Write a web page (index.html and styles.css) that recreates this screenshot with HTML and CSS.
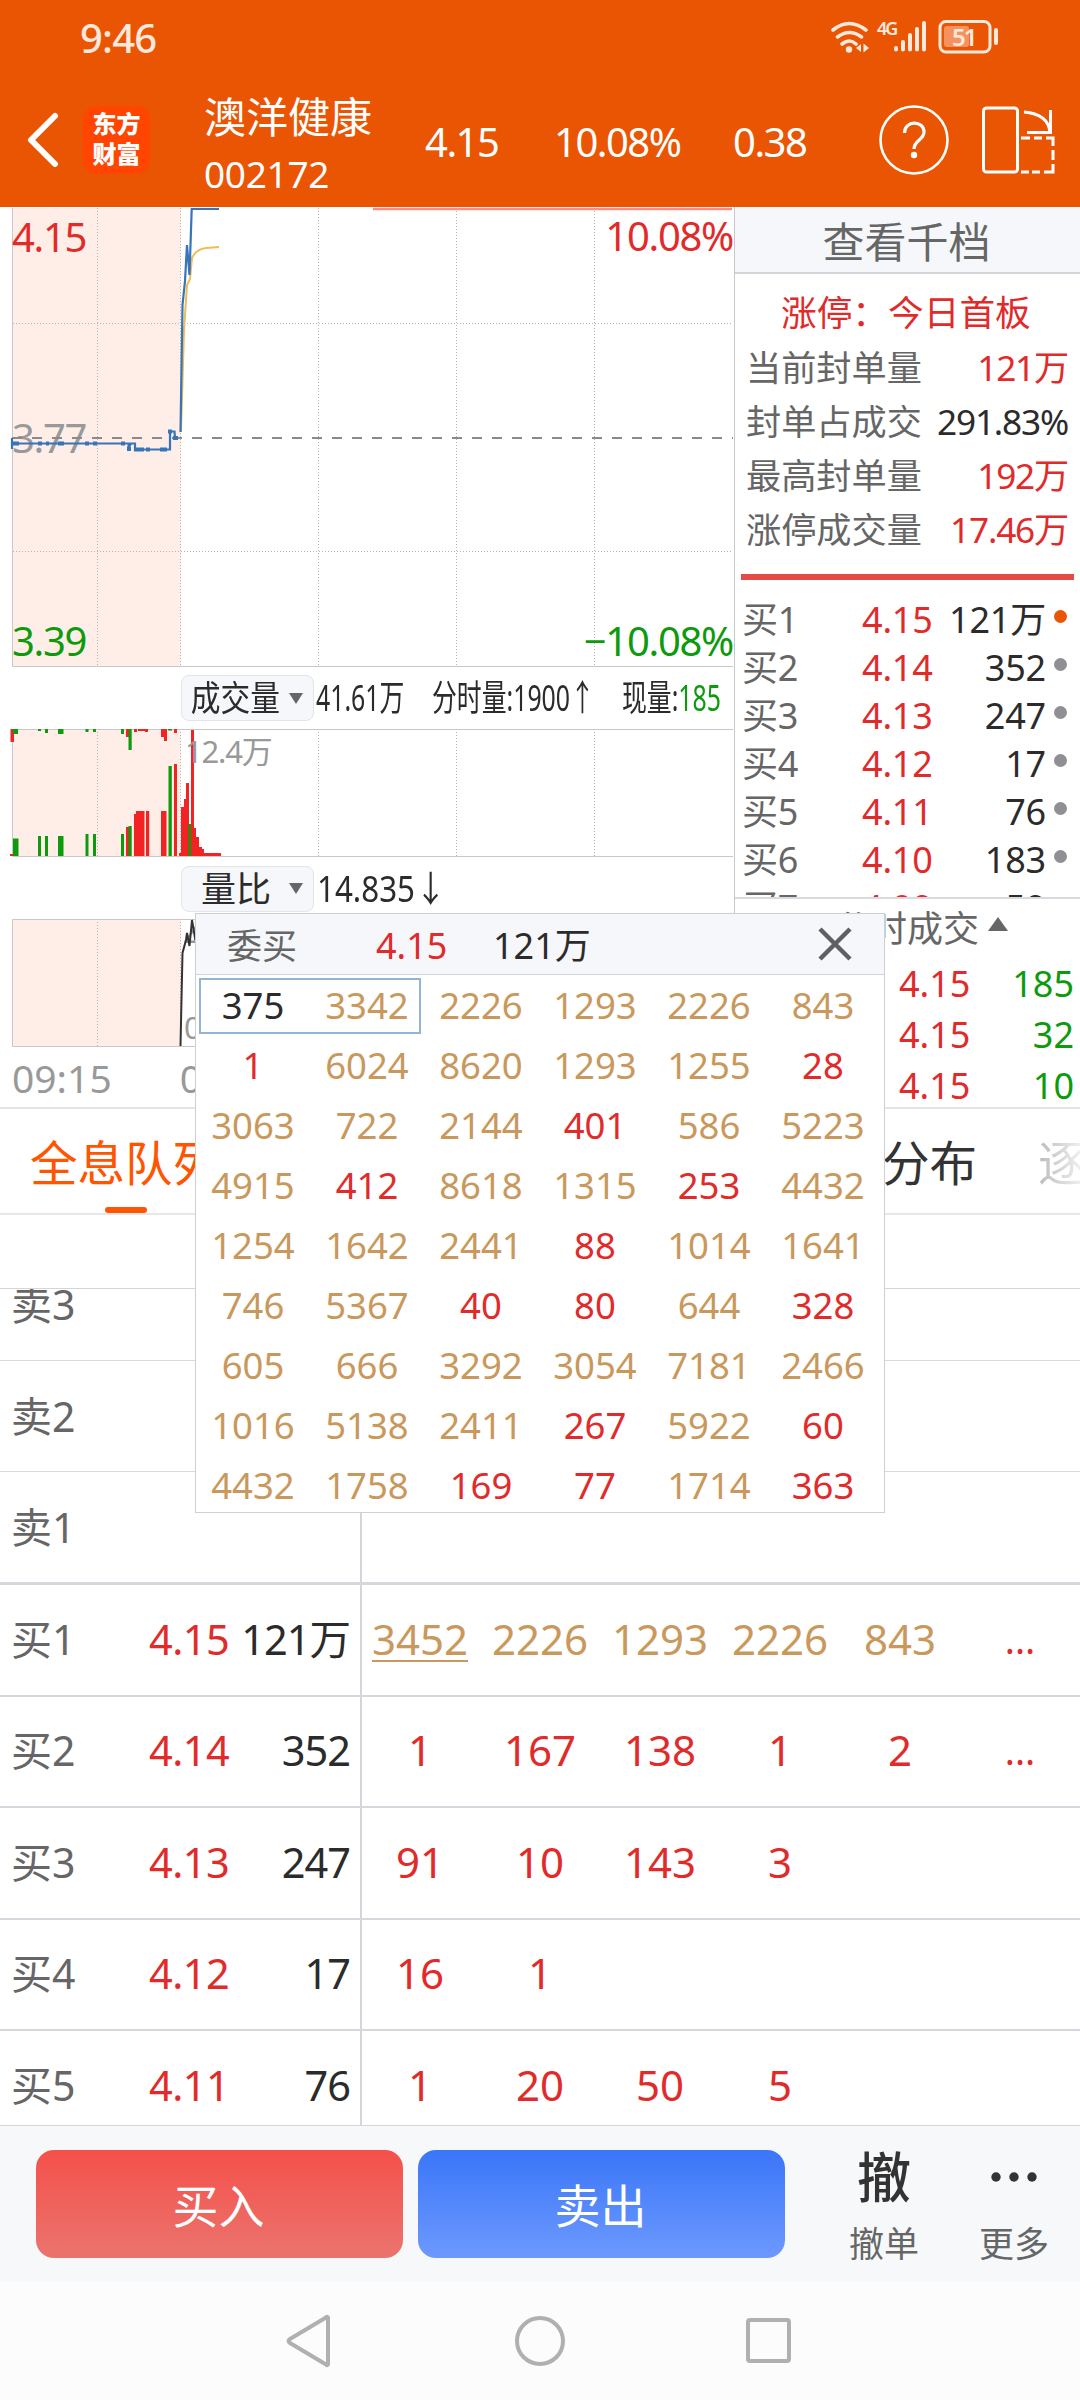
FILE: index.html
```html
<!DOCTYPE html>
<html lang="zh-CN">
<head>
    <meta charset="UTF-8">
    <meta name="viewport" content="width=device-width, initial-scale=1.0">
    <title>澳洋健康 002172</title>
    <link rel="stylesheet" href="styles.css">
</head>
<body>
    <header class="header">
        <div class="status-bar">
            <span class="clock">9:46</span>
            <svg class="status-icons" width="170" height="36" viewBox="830 19 170 36" fill="none" stroke="#ffe8dc">
                <!-- wifi -->
                <path d="M833 30q16-13 33 0M837.500 37q12-9 24 0M842 44q7.500-6 14 0" stroke-width="3.600" stroke-linecap="round"/>
                <circle cx="849" cy="49.500" r="3.200" fill="#ffe8dc" stroke="none"/>
                <path d="M861 44v8l-5-4zM863.500 43.500v9l5.500-4.500z" fill="#ffe8dc" stroke="none"/>
                <text x="877" y="35" class="net-label">4G</text>
                <!-- signal -->
                <path d="M896 48v1.500M903 42v7.500M910 35v14.500M917 29v20.500M924 23v26.500" stroke-width="4" stroke-linecap="round"/>
                <!-- battery -->
                <rect x="940" y="21.500" width="50" height="30.500" rx="6" stroke-width="3"/>
                <rect x="944" y="26" width="25" height="21" rx="3" fill="#f4935f" stroke="none"/>
                <path d="M996 30v13" stroke-width="4" stroke-linecap="round"/>
                <text x="952" y="45.500" class="battery-label">51</text>
            </svg>
        </div>
        <div class="title-bar">
            <svg class="back" width="32" height="56" viewBox="0 0 32 56"><path d="M28 4L4 28l24 24" fill="none" stroke="#fff" stroke-width="6" stroke-linecap="round" stroke-linejoin="round"/></svg>
            <div class="logo">东方<br>财富</div>
            <div class="stock">
                <div class="stock-name">澳洋健康</div>
                <div class="stock-code">002172</div>
            </div>
            <div class="quote quote-price">4.15</div>
            <div class="quote quote-rate">10.08%</div>
            <div class="quote quote-diff">0.38</div>
            <svg class="help" width="70" height="70" viewBox="0 0 70 70" fill="none" stroke="#fff">
                <circle cx="35" cy="35" r="33.500" stroke-width="2.600"/>
                <path d="M25.500 28c0-13 19.500-13 19.500-1 0 8-10 8-10 17" stroke-width="3.200"/>
                <circle cx="35" cy="50" r="3.200" fill="#fff" stroke="none"/>
            </svg>
            <svg class="rotate" width="74" height="70" viewBox="0 0 74 70" fill="none" stroke="#fff" stroke-width="3">
                <rect x="1.500" y="3" width="34" height="64" rx="3"/>
                <path d="M42 7q24 2 26 20M45 27.500h23.500V5"/>
                <path d="M39 33h9M52 33h8M64 33h7v8M71 45v10M71 59v8h-9M58 67h-8M47 67h-8"/>
            </svg>
        </div>
    </header>

    <main class="market">
        <section class="charts">
            <!-- price line -->
            <svg class="chart" width="734" height="461" viewBox="0 207 734 461">
                <rect x="13" y="208" width="168" height="458" fill="#feeee7"/>
                <path d="M97.500 208v458M180.500 208v458M318.500 208v458M456.500 208v458M594.500 208v458M13 323.500h720M13 551.500h720" class="grid"/>
                <path d="M12.500 208v458.500H733" class="frame"/>
                <text x="12" y="453" class="axis-text flat">3.77</text>
                <path d="M12 438H733" stroke="#8a8a8a" stroke-width="2" stroke-dasharray="10 10"/>
                <path d="M373 209H732" stroke="#f58f86" stroke-width="2.500"/>
                <path d="M181 432L184 330 187 285 190 279 192 258Q196 249 206 248L219 247" fill="none" stroke="#f0bd55" stroke-width="2"/>
                <path d="M12 449V438M12 443.500H129L128 449 131 443.500H135V449.500H170V431.500H174.500L175 438M180.500 432L182.500 305 185 281 187 245 189.500 275 191.700 209H219" fill="none" stroke="#3675b9" stroke-width="2.200"/>
                <path d="M12 443.500h7M38 443.500h4M46 443.500h3M58 443.500h6M85 443.500h4M93 443.500h4M121 443.500h4M127 449h4M134 449.500h10M146 449.500h4M160 449.500h7M168 431.500h4M173 438h5" stroke="#3675b9" stroke-width="4"/>
                <text x="12" y="252" class="axis-text up">4.15</text>
                <text x="12" y="656" class="axis-text down">3.39</text>
                <text x="733" y="251" class="axis-text up end">10.08%</text>
                <text x="733" y="656" class="axis-text down end">−10.08%</text>
            </svg>

            <div class="indicator">
                <div class="chip"><span class="chip-name narrow">成交量</span><span class="caret"></span></div>
                <div class="info info-total"><span class="squeeze">41.61万</span></div>
                <div class="info info-minute"><span class="squeeze">分时量:1900↑</span></div>
                <div class="info"><span class="squeeze">现量:<span class="down">185</span></span></div>
            </div>

            <!-- volume bars -->
            <svg class="chart" width="734" height="134" viewBox="0 726 734 134">
                <rect x="13" y="729" width="168" height="127" fill="#feeee7"/>
                <path d="M97.500 729v127M180.500 729v127M318.500 729v127M456.500 729v127M594.500 729v127" class="grid"/>
                <path d="M733 729.500H12.500V856.500H733" class="frame"/>
                <path fill="#f12323" d="M10.500 729h3.500v13h-3.500zM126 729h3v8h-3zM134 729h3v3h-3zM138 729h7v2h-7zM145 729h3v3h-3zM161 729h4v8h-4zM164 729h3v12h-3zM174 729h3v4h-3zM10 854h4v2h-4zM126 827h3v29h-3zM134 814h2v-3h8.500v45h-10.500zM146 811h3.200v45h-3.200zM161 811h5.500v45h-5.500zM174 764h3v92h-3zM179 853h2v-46h3v-8h2v-16h3v41h2v-94h3v98h2v9h3v10h3v2h2v4h17v3h-42z"/>
                <path fill="#0d9a0d" d="M13 729h5v5h-5zM38 729h3v2h-3zM45 729h3v4h-3zM58 729h5.500v5h-5.500zM85.500 729h3v3h-3zM93 729h3v3h-3zM121 729h3v5h-3zM128.500 729h3.200v21h-3.200zM168 729h4v1.500h-4zM13 838.500h5.500v17.500h-5.500zM38 836h3v20h-3zM45 836h3v20h-3zM58 836h5.500v20h-5.500zM85.500 834h3v22h-3zM93 834h3v22h-3zM121 834h3v22h-3zM128.500 826h3.200v30h-3.200zM168.500 766h3.300v90h-3.300zM188.500 824h2.500v32h-2.500z"/>
                <text x="185" y="763" class="scale-text">12.4万</text>
            </svg>

            <div class="indicator second">
                <div class="chip"><span class="chip-name">量比</span><span class="caret"></span></div>
                <div class="info"><span class="squeeze less">14.835↓</span></div>
            </div>

            <!-- volume ratio -->
            <svg class="chart" width="734" height="135" viewBox="0 915 734 135">
                <rect x="13" y="919" width="168" height="127" fill="#feeee7"/>
                <path d="M97.500 919v127M180.500 919v127M318.500 919v127" class="grid"/>
                <path d="M733 919.500H12.500V1046.500H733" class="frame"/>
                <text x="184" y="948" class="scale-text">42.1</text>
                <text x="184" y="1039" class="scale-text">0</text>
                <path d="M180.500 1046L182.500 953 186 940 187 933 189.500 946 192 920 195 938 200 930" fill="none" stroke="#333" stroke-width="2"/>
            </svg>
            <div class="time-axis"><span>09:15</span><span>09:30</span></div>
        </section>

        <aside class="side">
            <div class="side-title">查看千档</div>
            <div class="limit">
                <div class="limit-title">涨停：今日首板</div>
                <div class="limit-row"><span>当前封单量</span><b class="up">121万</b></div>
                <div class="limit-row"><span>封单占成交</span><b>291.83%</b></div>
                <div class="limit-row"><span>最高封单量</span><b class="up">192万</b></div>
                <div class="limit-row"><span>涨停成交量</span><b class="up">17.46万</b></div>
            </div>
            <div class="divider"></div>
            <div class="bids">
                <div class="bid"><span>买1</span><span class="up">4.15</span><b>121万</b><i class="dot hot"></i></div>
                <div class="bid"><span>买2</span><span class="up">4.14</span><b>352</b><i class="dot"></i></div>
                <div class="bid"><span>买3</span><span class="up">4.13</span><b>247</b><i class="dot"></i></div>
                <div class="bid"><span>买4</span><span class="up">4.12</span><b>17</b><i class="dot"></i></div>
                <div class="bid"><span>买5</span><span class="up">4.11</span><b>76</b><i class="dot"></i></div>
                <div class="bid"><span>买6</span><span class="up">4.10</span><b>183</b><i class="dot"></i></div>
                <div class="bid"><span>买7</span><span class="up">4.09</span><b>59</b><i class="dot"></i></div>
            </div>
            <div class="trades">
                <div class="trades-title">分时成交<span class="caret-up"></span></div>
                <div class="trade"><span class="up">4.15</span><span class="down">185</span></div>
                <div class="trade"><span class="up">4.15</span><span class="down">32</span></div>
                <div class="trade"><span class="up">4.15</span><span class="down">10</span></div>
            </div>
        </aside>
    </main>

    <nav class="tabs">
        <div class="tab active">全息队列</div>
        <div class="tab">分布</div>
        <div class="tab next">逐笔</div>
    </nav>

    <div class="queue-gap"></div>
    <section class="queue">
        <div class="row cut"><div class="level"><span>卖3</span></div><div class="orders"></div></div>
        <div class="row"><div class="level"><span>卖2</span></div><div class="orders"></div></div>
        <div class="row last-sell"><div class="level"><span>卖1</span></div><div class="orders"></div></div>
        <div class="row buy">
            <div class="level"><span>买1</span><span class="up">4.15</span><b>121万</b></div>
            <div class="orders big"><span class="mine">3452</span><span>2226</span><span>1293</span><span>2226</span><span>843</span><span class="more">...</span></div>
        </div>
        <div class="row buy">
            <div class="level"><span>买2</span><span class="up">4.14</span><b>352</b></div>
            <div class="orders"><span>1</span><span>167</span><span>138</span><span>1</span><span>2</span><span class="more">...</span></div>
        </div>
        <div class="row buy">
            <div class="level"><span>买3</span><span class="up">4.13</span><b>247</b></div>
            <div class="orders"><span>91</span><span>10</span><span>143</span><span>3</span></div>
        </div>
        <div class="row buy">
            <div class="level"><span>买4</span><span class="up">4.12</span><b>17</b></div>
            <div class="orders"><span>16</span><span>1</span></div>
        </div>
        <div class="row buy">
            <div class="level"><span>买5</span><span class="up">4.11</span><b>76</b></div>
            <div class="orders"><span>1</span><span>20</span><span>50</span><span>5</span></div>
        </div>
    </section>

    <footer class="actions">
        <button class="btn buy-btn">买入</button>
        <button class="btn sell-btn">卖出</button>
        <div class="action"><div class="action-icon">撤</div><div>撤单</div></div>
        <div class="action">
            <div class="action-icon"><svg width="50" height="12" viewBox="0 0 50 12" fill="#333"><circle cx="7" cy="6" r="4.700"/><circle cx="25" cy="6" r="4.700"/><circle cx="43" cy="6" r="4.700"/></svg></div>
            <div>更多</div>
        </div>
    </footer>

    <div class="nav-bar">
        <svg width="54" height="54" viewBox="0 0 54 54"><path d="M44 4.500v45a1 1 0 0 1-2 1L6 29q-3-2 0-4L42 3.500a1 1 0 0 1 2 1z"/></svg>
        <svg width="54" height="54" viewBox="0 0 54 54"><circle cx="27" cy="27" r="23"/></svg>
        <svg width="54" height="54" viewBox="0 0 54 54"><rect x="6" y="6" width="41" height="41" rx="2"/></svg>
    </div>

    <!-- order queue popup -->
    <div class="popup">
        <div class="popup-head">
            <span class="popup-side">委买</span>
            <span class="popup-price up">4.15</span>
            <span class="popup-qty">121万</span>
            <svg class="close" width="36" height="36" viewBox="0 0 36 36"><path d="M3 3l30 30M33 3L3 33" stroke="#606060" stroke-width="4.500"/></svg>
        </div>
        <div class="popup-grid">
            <span class="first">375</span><span>3342</span><span>2226</span><span>1293</span><span>2226</span><span>843</span>
            <span class="up">1</span><span>6024</span><span>8620</span><span>1293</span><span>1255</span><span class="up">28</span>
            <span>3063</span><span>722</span><span>2144</span><span class="up">401</span><span>586</span><span>5223</span>
            <span>4915</span><span class="up">412</span><span>8618</span><span>1315</span><span class="up">253</span><span>4432</span>
            <span>1254</span><span>1642</span><span>2441</span><span class="up">88</span><span>1014</span><span>1641</span>
            <span>746</span><span>5367</span><span class="up">40</span><span class="up">80</span><span>644</span><span class="up">328</span>
            <span>605</span><span>666</span><span>3292</span><span>3054</span><span>7181</span><span>2466</span>
            <span>1016</span><span>5138</span><span>2411</span><span class="up">267</span><span>5922</span><span class="up">60</span>
            <span>4432</span><span>1758</span><span class="up">169</span><span class="up">77</span><span>1714</span><span class="up">363</span>
        </div>
        <div class="selected"></div>
    </div>
</body>
</html>
```

FILE: styles.css
```css
* {
    box-sizing: border-box;
}

body {
    margin: 0;
    width: 1080px;
    height: 2400px;
    position: relative;
    overflow: hidden;
    font-family: "Noto Sans", "Noto Sans CJK SC", sans-serif;
    background-color: #fff;
    color: #2b2b2b;
}

b {
    font-weight: normal;
}

i {
    font-style: normal;
}

svg {
    display: block;
    flex: none;
}

.up {
    color: #e12b2b;
    fill: #e12b2b;
}

.down {
    color: #0d9a0d;
    fill: #0d9a0d;
}

/* header */
.header {
    height: 207px;
    background-color: #ea5504;
    color: #fff;
}

.status-bar {
    display: flex;
    justify-content: space-between;
    height: 74px;
    padding: 19px 80px 0 80px;
}

.clock {
    font-size: 40px;
    line-height: 38px;
    font-weight: 500;
    letter-spacing: -0.8px;
    color: #ffe8dc;
}

.net-label {
    font: 600 18px "Noto Sans", sans-serif;
    letter-spacing: -2px;
    fill: #ffe8dc;
    stroke: none;
}

.battery-label {
    font: 600 24px "Noto Sans", sans-serif;
    letter-spacing: -2px;
    fill: #ffe8dc;
    stroke: none;
}

.title-bar {
    display: flex;
    align-items: center;
    height: 131px;
    padding-left: 27px;
}

.logo {
    width: 67px;
    height: 68px;
    margin-left: 24px;
    padding-top: 3px;
    border-radius: 14px;
    background-color: #ff4500;
    font-size: 24px;
    line-height: 30px;
    font-weight: 900;
    text-align: center;
}

.stock {
    width: 221px;
    margin-left: 54px;
    padding-top: 11px;
}

.stock-name {
    font-size: 42px;
    line-height: 58px;
}

.stock-code {
    font-size: 37px;
    line-height: 56px;
    letter-spacing: -0.3px;
}

.quote {
    flex: none;
    font-size: 40px;
    line-height: 56px;
    letter-spacing: -1.5px;
    padding-top: 4px;
    white-space: nowrap;
}

.quote-price {
    width: 129px;
}

.quote-rate {
    width: 179px;
}

.quote-diff {
    width: 146px;
}

.rotate {
    margin-left: 33px;
}

/* charts */
.market {
    display: flex;
    height: 902px;
    border-bottom: 2px solid #e3e4e6;
}

.charts {
    width: 734px;
    display: flex;
    flex-direction: column;
}

.grid {
    stroke: #b4b4b4;
    stroke-width: 1;
    stroke-dasharray: 1 2;
}

.frame {
    fill: none;
    stroke: #c8c8c8;
    stroke-width: 1;
}

.axis-text {
    font-size: 40px;
    letter-spacing: -1.3px;
}

.flat {
    fill: #999;
}

.end {
    text-anchor: end;
}

.scale-text {
    font-size: 31px;
    letter-spacing: -1.2px;
    fill: #999;
}

.indicator {
    display: flex;
    align-items: center;
    height: 58px;
    padding: 2px 0 0 181px;
}

.indicator.second {
    height: 55px;
}

.chip {
    display: flex;
    flex: none;
    align-items: center;
    justify-content: flex-end;
    width: 133px;
    height: 46px;
    padding-right: 10px;
    border: 1px solid #e2e4e8;
    border-radius: 8px;
    background-color: #f6f7fa;
    white-space: nowrap;
}

.chip-name {
    font-size: 35px;
    line-height: 40px;
    margin-right: 18px;
}

.chip-name.narrow {
    transform: scaleX(0.85);
    transform-origin: right;
    margin-right: 9px;
}

.caret {
    border: 7px solid transparent;
    border-top: 11px solid #666;
    border-bottom: 0;
}

.info {
    flex: none;
    margin-left: 2px;
    font-size: 36px;
    line-height: 46px;
    white-space: nowrap;
}

.info-total {
    width: 114px;
}

.info-minute {
    width: 188px;
}

.squeeze {
    display: inline-block;
    transform: scaleX(0.69);
    transform-origin: left;
}

.squeeze.less {
    margin-left: 1px;
    transform: scaleX(0.87);
}

.time-axis {
    display: flex;
    gap: 68px;
    padding-left: 12px;
    font-size: 39px;
    line-height: 56px;
    color: #999;
}

/* right column */
.side {
    width: 346px;
    border-left: 1px solid #c8c8c8;
}

.side-title {
    height: 67px;
    border-bottom: 2px solid #d2d6db;
    background-color: #f6f7fa;
    font-size: 42px;
    line-height: 70px;
    text-align: center;
    color: #666;
    padding-right: 2px;
}

.limit {
    height: 300px;
    padding: 10px 12px 0 11px;
}

.limit-title {
    font-size: 35.700px;
    line-height: 56px;
    padding-left: 35px;
    color: #e12b2b;
}

.limit-row {
    display: flex;
    justify-content: space-between;
    font-size: 35.200px;
    line-height: 54px;
    white-space: nowrap;
}

.limit-row span {
    color: #666;
}

.limit-row b {
    letter-spacing: -1.200px;
}

.divider {
    height: 6px;
    margin: 0 6px;
    background-color: #e64a47;
}

.bids {
    height: 319px;
    padding: 16px 12px 0 7px;
    overflow: hidden;
    border-bottom: 2px solid #d8dadd;
}

.bid {
    display: grid;
    grid-template-columns: 120px 80px 104px 1fr;
    font-size: 36px;
    line-height: 48px;
    letter-spacing: -0.2px;
    white-space: nowrap;
}

.bid > span:first-child {
    color: #666;
}

.bid b {
    text-align: right;
}

.dot {
    width: 13px;
    height: 13px;
    margin: 14px 0 0 8px;
    border-radius: 50%;
    background-color: #8f8f94;
}

.dot.hot {
    background-color: #ea5504;
}

.trades-title {
    display: flex;
    align-items: center;
    height: 59px;
    padding-left: 100px;
    font-size: 36px;
    line-height: 56px;
    color: #666;
}

.caret-up {
    margin: -10px 0 0 9px;
    border: 10px solid transparent;
    border-bottom: 14px solid #666;
    border-top: 0;
}

.trade {
    display: flex;
    justify-content: space-between;
    padding: 0 6px 0 164px;
    font-size: 36px;
    line-height: 51px;
}

/* tabs */
.tabs {
    display: flex;
    height: 106px;
    border-bottom: 2px solid #e6e7e9;
    padding-left: 30px;
    font-size: 47.500px;
    line-height: 108px;
    color: #333;
    white-space: nowrap;
    overflow: hidden;
}

.tab {
    flex: none;
}

.tab.active {
    width: 852px;
    color: #ff5500;
}

.tab.active::after {
    content: "";
    display: block;
    width: 42px;
    height: 6px;
    margin: -10px 0 0 75px;
    border-radius: 3px;
    background-color: #ff5500;
}

.tab.next {
    margin-left: 61px;
    color: transparent;
    background: linear-gradient(to right, #bbb, #eee 42px, #fff 44px);
    background-clip: text;
    -webkit-background-clip: text;
}

/* order queue */
.queue-gap {
    height: 73px;
}

.queue {
    height: 838px;
    overflow: hidden;
    border-top: 1px solid #d3d5da;
    border-bottom: 1px solid #d3d5da;
}

.row {
    display: flex;
    height: 111.500px;
    border-bottom: 1px solid #d9dbdf;
}

.row.cut {
    margin-top: -40px;
}

.row.last-sell {
    height: 113px;
    border-bottom: 3px solid #d5d7dc;
}

.row.buy {
    border-bottom: 2px solid #d5d7dc;
    height: 111.500px;
}

.row.buy .level,
.row.buy .orders {
    padding-bottom: 2px;
}

.level {
    display: grid;
    grid-template-columns: 138px 96px 115px;
    align-items: center;
    width: 362px;
    padding-left: 11px;
    border-right: 2px solid #d3d5da;
    font-size: 41.500px;
    line-height: 60px;
    white-space: nowrap;
}

.level span:first-child {
    font-size: 41px;
    color: #666;
}

.level span:nth-child(2) {
    letter-spacing: -0.5px;
}

.level b {
    text-align: right;
    margin-left: -20px;
    margin-right: 10px;
    letter-spacing: -1px;
}

.orders {
    display: grid;
    grid-template-columns: repeat(6, 120px);
    align-items: center;
    justify-items: center;
    margin-left: -2px;
    font-size: 42px;
    line-height: 60px;
    color: #e12b2b;
}

.orders.big {
    color: #c9985c;
}

.mine {
    line-height: 48px;
    border-bottom: 2px solid #c9985c;
    margin-top: -1px;
    height: 47px;
}

.orders .more {
    font-size: 38px;
    color: #e12b2b;
}

/* bottom actions */
.actions {
    display: flex;
    height: 156px;
    padding: 24px 0 0 36px;
    background-color: #f6f8fa;
}

.btn {
    width: 367px;
    height: 108px;
    margin-right: 15px;
    padding: 0 2px 3px 0;
    border: none;
    border-radius: 18px;
    color: #fff;
    font-family: inherit;
    font-size: 46px;
}

.buy-btn {
    background: linear-gradient(#f5504a, #eb746e);
}

.sell-btn {
    background: linear-gradient(#3a76f8, #6d99fe);
}

.action {
    width: 130px;
    margin-left: 19px;
    font-size: 35px;
    line-height: 52px;
    text-align: center;
    color: #666;
}

.action + .action {
    margin-left: 0;
}

.action-icon {
    display: flex;
    align-items: center;
    justify-content: center;
    height: 54px;
    margin-bottom: 14px;
    font-size: 54px;
    font-weight: 500;
    color: #333;
}

/* system navigation */
.nav-bar {
    display: flex;
    justify-content: center;
    gap: 175px;
    height: 118px;
    padding-top: 32px;
    background-color: #fcfcfc;
    fill: none;
    stroke: #b0b0b0;
    stroke-width: 4;
}

/* popup */
.popup {
    position: absolute;
    left: 195px;
    top: 913px;
    width: 690px;
    height: 600px;
    overflow: hidden;
    border: 1px solid #ccd0d3;
    background-color: #fff;
}

.popup-head {
    display: flex;
    align-items: center;
    height: 61px;
    padding: 4px 31px 0;
    border-bottom: 1px solid #d3d7da;
    background-color: #f6f7fa;
    font-size: 36px;
    line-height: 50px;
}

.popup-side {
    width: 149px;
    font-size: 35px;
    color: #666;
}

.popup-price {
    width: 117px;
}

.close {
    margin: -4px 0 0 auto;
}

.popup-grid {
    display: grid;
    grid-template-columns: repeat(6, 114px);
    grid-auto-rows: 60px;
    text-align: center;
    font-size: 36.500px;
    line-height: 60px;
    color: #c9985c;
}

.popup-grid .first {
    color: #2b2b2b;
}

.selected {
    position: absolute;
    left: 3px;
    top: 64px;
    width: 222px;
    height: 56px;
    border: 2px solid #93b3d7;
}
```
